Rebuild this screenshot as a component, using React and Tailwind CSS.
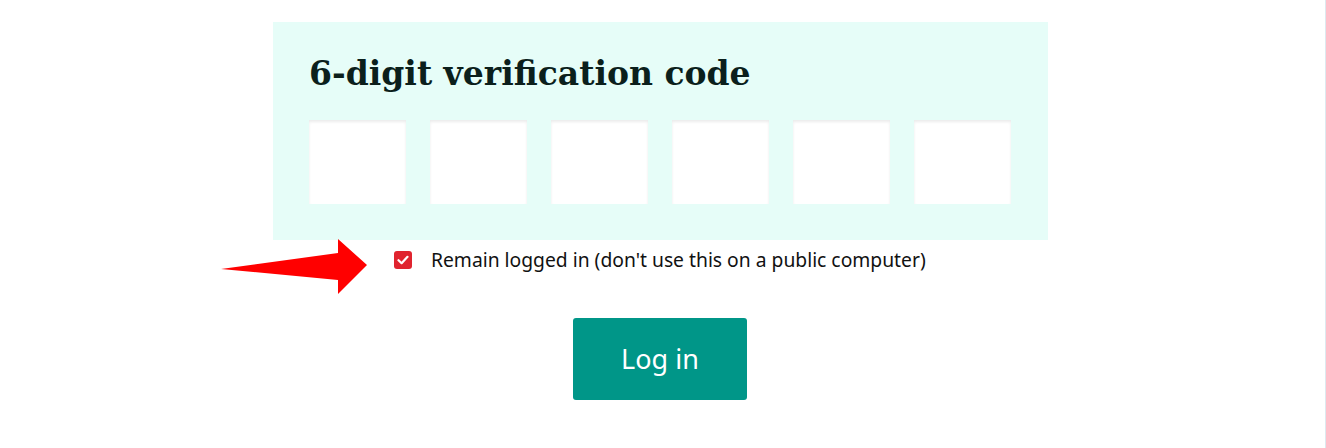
import React from 'react';

const digits = [0, 1, 2, 3, 4, 5];

function Arrow() {
  return (
    <svg className="absolute left-[218px] top-[236px]" width="154" height="62" viewBox="0 0 154 62">
      <polygon points="3,33 120,17 120,3 149,29 120,58 120,44" fill="#ff0000" />
    </svg>
  );
}

export default function App() {
  return (
    <div className="relative w-[1326px] h-[448px] bg-white border-r border-[#dde9ef] overflow-hidden">
      <div className="flex flex-col items-center pr-[4px] pt-[22px]">
        <form className="w-[775px]" onSubmit={(e) => e.preventDefault()}>
          <div className="bg-[#e6fdf8] px-[36px] pt-[30px] pb-[36px]">
            <h2 className="text-[33px] leading-[44px] font-bold text-[#0b1f1c] mb-[24px]" style={{ fontFamily: '"DejaVu Serif", "Liberation Serif", serif' }}>
              6-digit verification code
            </h2>
            <div className="flex gap-[24px]">
              {digits.map((d) => (
                <input
                  key={d}
                  type="text"
                  maxLength={1}
                  className="w-[97px] h-[84px] bg-white outline-none shadow-[inset_0_2px_3px_rgba(0,0,0,0.08)]"
                />
              ))}
            </div>
          </div>

          <label className="flex items-center gap-[19px] pl-[121px] mt-[6px] text-[19.3px] text-[#111]" style={{ fontFamily: '"Noto Sans", "Open Sans", sans-serif' }}>
            <span className="w-[18px] h-[18px] rounded-[3px] bg-[#e0242f] flex items-center justify-center">
              <svg width="12" height="10" viewBox="0 0 12 10">
                <path d="M1.5 5.2 L4.6 8.2 L10.5 1.8" stroke="white" strokeWidth="2.2" fill="none" strokeLinecap="round" strokeLinejoin="round" />
              </svg>
            </span>
            Remain logged in (don't use this on a public computer)
          </label>

          <div className="flex justify-center mt-[43px]">
            <button
              type="submit"
              className="w-[174px] h-[82px] rounded-[3px] bg-[#009688] text-white text-[27px] -ml-[1px]"
              style={{ fontFamily: '"Noto Sans", "Open Sans", sans-serif' }}
            >
              Log in
            </button>
          </div>
        </form>
      </div>
      <Arrow />
    </div>
  );
}
